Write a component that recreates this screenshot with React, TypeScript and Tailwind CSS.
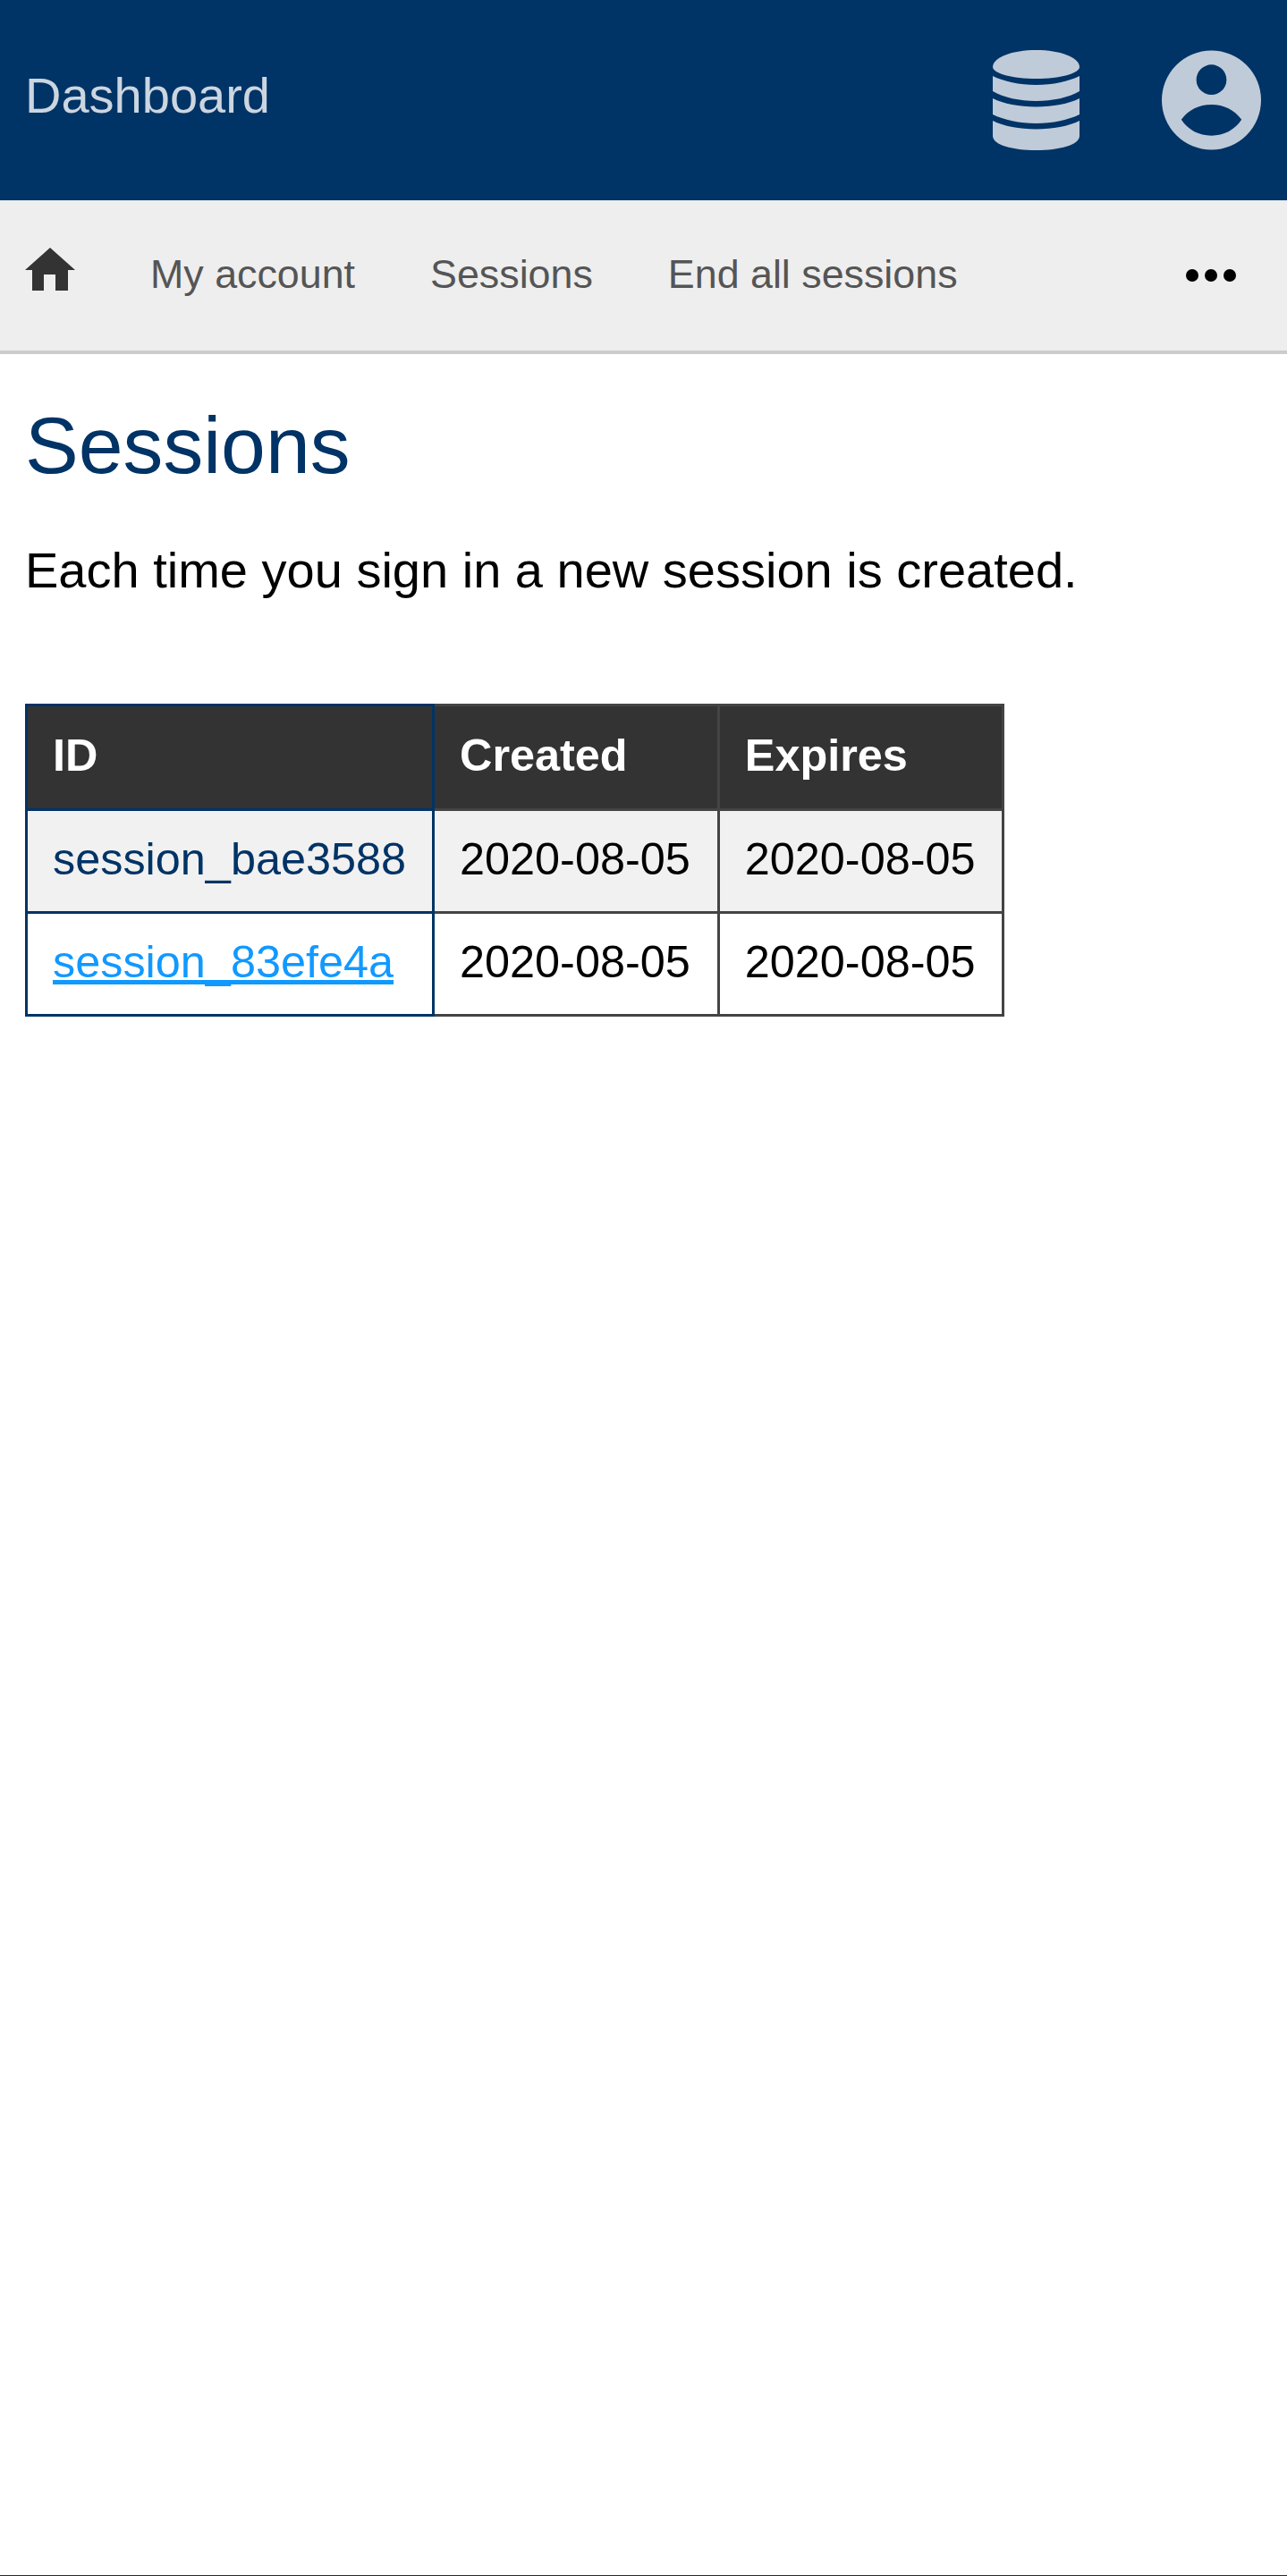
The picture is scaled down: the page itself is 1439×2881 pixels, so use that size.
const sessions = [
  { id: "session_bae3588", created: "2020-08-05", expires: "2020-08-05", current: true },
  { id: "session_83efe4a", created: "2020-08-05", expires: "2020-08-05", current: false },
];

function DatabaseIcon() {
  return (
    <svg width="97" height="112" viewBox="0 0 97 112" fill="#bfcbd8">
      <path d="M0 19C0 8 22 0 48.500 0S97 8 97 19C97 26 75 32 48.500 32S0 26 0 19Z" />
      <path d="M0 29C12 35 30 39 48.500 39S85 35 97 29V46C85 53 67 57 48.500 57S12 53 0 46Z" />
      <path d="M0 54C12 60 30 63.500 48.500 63.500S85 60 97 54V72C85 78 67 82 48.500 82S12 78 0 72Z" />
      <path d="M0 79C12 85 30 88.500 48.500 88.500S85 85 97 79V96C97 106 75 112 48.500 112S0 106 0 96Z" />
    </svg>
  );
}

function UserIcon() {
  return (
    <svg width="111" height="112" viewBox="0 0 112 112" fill="#bfcbd8">
      <path
        fillRule="evenodd"
        d="M56 0A56 56 0 1 1 56 112A56 56 0 1 1 56 0ZM56 16A17 17 0 1 0 56 50A17 17 0 1 0 56 16ZM22 78C30 67 42 61 56 61S82 67 90 78C82 90 70 96 56 96S30 90 22 78Z"
      />
    </svg>
  );
}

function HomeIcon() {
  return (
    <svg className="mb-[14px]" width="56" height="48" viewBox="0 0 56 48" fill="#333333">
      <path d="M28 0L56 25H48V48H34V30H21V48H8V25H0Z" />
    </svg>
  );
}

export default function App() {
  return (
    <div className="min-h-[2881px] bg-white border-b border-[#003366] font-['Liberation_Sans',Arial,sans-serif]">
      {/* Top bar */}
      <header className="h-[224px] bg-[#003366] flex items-center pl-7 pr-[29px]">
        <a className="text-[56px] text-[#ccd6e0] leading-none mb-[11px]">Dashboard</a>
        <div className="ml-auto flex items-center gap-[92px]">
          <DatabaseIcon />
          <UserIcon />
        </div>
      </header>

      {/* Nav */}
      <nav className="h-[172px] bg-[#eeeeee] border-b-[4px] border-[#cccccc] flex items-center pl-7 pr-[57px]">
        <HomeIcon />
        <div className="ml-[84px] mb-[3px] flex items-center gap-[84px] text-[44.800px] text-[#555555] leading-none">
          <a>My account</a>
          <a>Sessions</a>
          <a>End all sessions</a>
        </div>
        <div className="ml-auto flex gap-[7px]">
          <span className="w-[14px] h-[14px] rounded-full bg-black" />
          <span className="w-[14px] h-[14px] rounded-full bg-black" />
          <span className="w-[14px] h-[14px] rounded-full bg-black" />
        </div>
      </nav>

      <main className="px-7">
        <h1 className="mt-[49px] text-[89.600px] leading-[106px] text-[#003366]">Sessions</h1>
        <p className="mt-[52px] text-[56px] leading-[70px] text-black">
          Each time you sign in a new session is created.
        </p>

        <table className="mt-[114px] border-collapse text-[50.400px] leading-[58px]">
          <thead>
            <tr className="bg-[#333333] text-white">
              <th className="h-[117px] w-[455px] pl-[28px] pr-[28px] pb-[5px] text-left font-bold border-[3px] border-[#003366]">ID</th>
              <th className="h-[117px] pl-[28px] pr-[30px] pb-[5px] text-left font-bold border-[3px] border-[#444444]">Created</th>
              <th className="h-[117px] pl-[28px] pr-[29px] pb-[5px] text-left font-bold border-[3px] border-[#444444]">Expires</th>
            </tr>
          </thead>
          <tbody>
            {sessions.map((s) => (
              <tr key={s.id} className={s.current ? "bg-[#f1f1f1]" : "bg-white"}>
                <td className="h-[115px] pl-[28px] pr-[28px] pb-[4px] border-[3px] border-[#003366]">
                  {s.current ? (
                    <span className="text-[#003366]">{s.id}</span>
                  ) : (
                    <a className="text-[#1199ff] underline">{s.id}</a>
                  )}
                </td>
                <td className="h-[115px] pl-[28px] pr-[30px] pb-[4px] border-[3px] border-[#444444] text-black">{s.created}</td>
                <td className="h-[115px] pl-[28px] pr-[29px] pb-[4px] border-[3px] border-[#444444] text-black">{s.expires}</td>
              </tr>
            ))}
          </tbody>
        </table>
      </main>
    </div>
  );
}
